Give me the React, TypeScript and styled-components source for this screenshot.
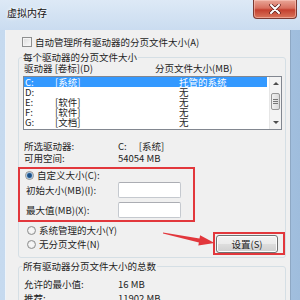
import React from "react";
import styled, { createGlobalStyle } from "styled-components";

const GlobalStyle = createGlobalStyle`
  html, body {
    margin: 0;
    padding: 0;
    width: 300px;
    height: 300px;
    overflow: hidden;
    background: #fff;
  }
  body {
    font-family: "Noto Sans CJK SC", "Liberation Sans", sans-serif;
    font-size: 9.5px;
    color: #1e1e1e;
  }
`;

const drives = [
  { drive: "C:", label: "[系统]", size: "托管的系统", selected: true },
  { drive: "D:", label: "", size: "无", selected: false },
  { drive: "E:", label: "[软件]", size: "无", selected: false },
  { drive: "F:", label: "[软件]", size: "无", selected: false },
  { drive: "G:", label: "[文档]", size: "无", selected: false },
];

export default function App() {
  return (
    <>
      <GlobalStyle />
      <Window>
        <TitleBar>
          <Title>虚拟内存</Title>
          <CloseButton>
            <svg width="12" height="10" viewBox="0 0 12 10">
              <path d="M2 1 L10 9 M10 1 L2 9" stroke="#5a1f1a" strokeWidth="3.4" strokeLinecap="round" />
              <path d="M2 1 L10 9 M10 1 L2 9" stroke="#fff" strokeWidth="2" strokeLinecap="round" />
            </svg>
          </CloseButton>
        </TitleBar>
        <Frame>
          <Content>
            <CheckRow>
              <CheckBox />
              <span>自动管理所有驱动器的分页文件大小(A)</span>
            </CheckRow>

            <GroupBox>
              <Legend>每个驱动器的分页文件大小</Legend>
              <HeaderRow>
                <span>驱动器 [卷标](D)</span>
                <span>分页文件大小(MB)</span>
              </HeaderRow>
              <ListBox>
                <Rows>
                  {drives.map((d) => (
                    <DriveRow key={d.drive} $selected={d.selected}>
                      <span>{d.drive}</span>
                      <span>{d.label}</span>
                      <span>{d.size}</span>
                    </DriveRow>
                  ))}
                </Rows>
                <ScrollBar>
                  <ScrollButton>
                    <Triangle $dir="up" />
                  </ScrollButton>
                  <Track>
                    <Thumb>
                      <Grip />
                      <Grip />
                      <Grip />
                    </Thumb>
                  </Track>
                  <ScrollButton>
                    <Triangle $dir="down" />
                  </ScrollButton>
                </ScrollBar>
              </ListBox>

              <InfoGrid>
                <span>所选驱动器:</span>
                <span>
                  C:<Gap />[系统]
                </span>
                <span>可用空间:</span>
                <span>54054 MB</span>
              </InfoGrid>

              <Highlight>
                <RadioRow>
                  <Radio $checked />
                  <span>自定义大小(C):</span>
                </RadioRow>
                <FieldRow>
                  <span>初始大小(MB)(I):</span>
                  <TextBox />
                </FieldRow>
                <FieldRow $gap={4}>
                  <span>最大值(MB)(X):</span>
                  <TextBox />
                </FieldRow>
              </Highlight>

              <OptionsRow>
                <RadioColumn>
                  <RadioRow>
                    <Radio />
                    <span>系统管理的大小(Y)</span>
                  </RadioRow>
                  <RadioRow>
                    <Radio />
                    <span>无分页文件(N)</span>
                  </RadioRow>
                </RadioColumn>
                <ButtonHighlight>
                  <PushButton>设置(S)</PushButton>
                </ButtonHighlight>
              </OptionsRow>
            </GroupBox>

            <GroupBox $tight>
              <Legend>所有驱动器分页文件大小的总数</Legend>
              <TotalsGrid>
                <span>允许的最小值:</span>
                <span>16 MB</span>
                <span>推荐:</span>
                <span>11902 MB</span>
              </TotalsGrid>
            </GroupBox>
          </Content>
        </Frame>
        <Overlay width="300" height="300" viewBox="0 0 300 300">
          <polygon
            points="163,232.4 199.5,238.4 200.1,235.3 214.5,243 198.3,245.5 198.9,242.4 163,233.6"
            fill="#e2373c"
          />
        </Overlay>
      </Window>
    </>
  );
}

const Window = styled.div`
  position: relative;
  width: 300px;
  height: 300px;
  display: flex;
  flex-direction: column;
  overflow: hidden;
  background: linear-gradient(to right, #c6daef 0%, #bad1ea 60%, #9fbddd 100%);
`;

const TitleBar = styled.div`
  height: 30px;
  flex: none;
  display: flex;
  justify-content: space-between;
  align-items: flex-start;
  padding: 0 3px 0 7px;
  background: linear-gradient(to bottom, #dde9f6, #cadcf0);
`;

const Title = styled.span`
  line-height: 26px;
  font-size: 10px;
  color: #111;
  text-shadow: 0 0 4px #fff, 0 0 2px #fff;
`;

const CloseButton = styled.div`
  width: 42px;
  height: 18px;
  display: flex;
  align-items: center;
  justify-content: center;
  border: 1px solid #7a3a33;
  border-top: none;
  border-radius: 0 0 4px 4px;
  background: linear-gradient(to bottom, #e9a798 0%, #d8705f 45%, #c4402f 55%, #d9755c 100%);
  box-shadow: inset 0 0 0 1px rgba(255, 210, 200, 0.5);
`;

const Frame = styled.div`
  flex: 1;
  display: flex;
  padding: 0 10px 0 6px;
  min-height: 0;
`;

const Content = styled.div`
  flex: 1;
  background: #f0f0f0;
  padding: 7px 4px 0 12px;
  overflow: hidden;
  box-shadow: -1px 0 0 #eef4fa, 1px 0 0 #8ea8c4;
`;

const CheckRow = styled.div`
  display: flex;
  align-items: center;
  gap: 3px;
  height: 10px;
  line-height: 10px;
  padding-left: 4px;
`;

const CheckBox = styled.span`
  width: 10px;
  height: 10px;
  box-sizing: border-box;
  border: 1px solid #8e8f8f;
  background: linear-gradient(135deg, #dcdcdc, #fbfbfb);
  box-shadow: inset 0 0 0 1px #f4f4f4;
`;

const GroupBox = styled.fieldset<{ $tight?: boolean }>`
  margin: ${(p) => (p.$tight ? "3px" : "5px")} 0 0 0;
  padding: 0 4px ${(p) => (p.$tight ? "0" : "2px")} 5px;
  border: 1px solid #d5dfe5;
  border-radius: 3px;
  min-width: 0;
`;

const Legend = styled.legend`
  margin-left: -2px;
  padding: 0 1px;
  line-height: 11px;
  color: #1e1e1e;
`;

const HeaderRow = styled.div`
  display: grid;
  grid-template-columns: 131px 1fr;
  line-height: 10px;
  margin-bottom: 3px;
`;

const ListBox = styled.div`
  display: flex;
  height: 54px;
  box-sizing: border-box;
  margin: 0 -1px 0 -1px;
  border: 1px solid #828790;
  background: #fff;
`;

const Rows = styled.div`
  flex: 1;
  padding-right: 2px;
`;

const DriveRow = styled.div<{ $selected: boolean }>`
  display: grid;
  grid-template-columns: 30px 124px 1fr;
  height: 10px;
  line-height: 10px;
  padding-left: 1px;
  background: ${(p) => (p.$selected ? "#3399ff" : "transparent")};
  color: ${(p) => (p.$selected ? "#fff" : "#1e1e1e")};
`;

const ScrollBar = styled.div`
  width: 11px;
  display: flex;
  flex-direction: column;
  background: #f3f3f3;
  border-left: 1px solid #e6e6e6;
`;

const ScrollButton = styled.div`
  height: 13px;
  display: flex;
  align-items: center;
  justify-content: center;
`;

const Triangle = styled.span<{ $dir: "up" | "down" }>`
  width: 0;
  height: 0;
  border-left: 3px solid transparent;
  border-right: 3px solid transparent;
  ${(p) => (p.$dir === "up" ? "border-bottom: 3px solid #4d4d4d;" : "border-top: 3px solid #4d4d4d;")}
`;

const Track = styled.div`
  flex: 1;
  padding: 3px 1px 0 1px;
`;

const Thumb = styled.div`
  height: 17px;
  box-sizing: border-box;
  border: 1px solid #979797;
  border-radius: 2px;
  background: linear-gradient(to right, #f1f1f1, #dadada);
  display: flex;
  flex-direction: column;
  align-items: center;
  justify-content: center;
  gap: 1px;
`;

const Grip = styled.span`
  width: 5px;
  height: 1px;
  background: #777;
`;

const InfoGrid = styled.div`
  display: grid;
  grid-template-columns: 94px 1fr;
  line-height: 12px;
  margin-top: 10px;
`;

const Gap = styled.span`
  display: inline-block;
  width: 12px;
`;

const Highlight = styled.div`
  margin: 3px 0 0 -6px;
  width: 177px;
  box-sizing: border-box;
  border: 2px solid #e2373c;
  padding: 1px 0 2px 5px;
`;

const RadioRow = styled.div`
  display: flex;
  align-items: center;
  gap: 3px;
  height: 10px;
  line-height: 10px;
`;

const Radio = styled.span<{ $checked?: boolean }>`
  width: 9px;
  height: 9px;
  box-sizing: border-box;
  border-radius: 50%;
  border: 1px solid #8e8f8f;
  background: ${(p) =>
    p.$checked
      ? "radial-gradient(circle, #1d4f85 0 1.8px, #5f95c9 2.6px, #eef2f6 3.4px)"
      : "radial-gradient(circle, #f6f6f6 0 2px, #dedede 4px)"};
`;

const FieldRow = styled.div<{ $gap?: number }>`
  display: grid;
  grid-template-columns: 92px 63px;
  align-items: center;
  margin-top: ${(p) => p.$gap ?? 2}px;
  padding-left: 1px;
`;

const TextBox = styled.div`
  height: 16px;
  box-sizing: border-box;
  border: 1px solid #c5c9cf;
  border-top-color: #abadb3;
  border-radius: 2px;
  background: #fff;
`;

const OptionsRow = styled.div`
  display: flex;
  justify-content: space-between;
  align-items: flex-start;
`;

const RadioColumn = styled.div`
  display: flex;
  flex-direction: column;
  gap: 4px;
  padding: 3px 0 0 3px;
`;

const ButtonHighlight = styled.div`
  margin: 10px -4px 0 0;
  width: 72px;
  height: 23px;
  box-sizing: border-box;
  border: 2px solid #e2373c;
  padding: 1px 0 0 1px;
`;

const PushButton = styled.div`
  width: 62px;
  height: 18px;
  box-sizing: border-box;
  border: 1px solid #707070;
  border-radius: 3px;
  background: linear-gradient(to bottom, #f2f2f2 0%, #ebebeb 48%, #dddddd 52%, #cfcfcf 100%);
  box-shadow: inset 0 0 0 1px #fcfcfc;
  display: flex;
  align-items: center;
  justify-content: center;
  line-height: 10px;
`;

const TotalsGrid = styled.div`
  display: grid;
  grid-template-columns: 94px 1fr;
  line-height: 14px;
  padding-top: 5px;
`;

const Overlay = styled.svg`
  position: absolute;
  left: 0;
  top: 0;
  pointer-events: none;
`;
